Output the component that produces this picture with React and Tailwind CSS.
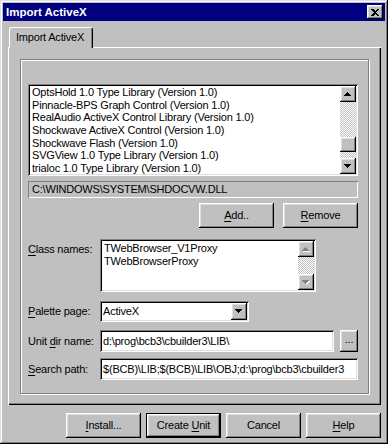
import React from 'react';

const raised =
  'bg-[#c0c0c0] shadow-[inset_-1px_-1px_#000,inset_1px_1px_#fff,inset_-2px_-2px_#808080,inset_2px_2px_#dfdfdf]';
const sunken =
  'bg-white shadow-[inset_1px_1px_#808080,inset_-1px_-1px_#fff,inset_2px_2px_#000,inset_-2px_-2px_#dfdfdf]';
const checker =
  'bg-[repeating-conic-gradient(#c0c0c0_0%_25%,#fff_0%_50%)] bg-[length:2px_2px]';

const Arrow = ({ dir = 'up', disabled }) => {
  const pts = dir === 'up' ? '3.5,0 7,4 0,4' : '0,0 7,0 3.5,4';
  return (
    <svg width="8" height="5" viewBox="0 0 8 5" shapeRendering="crispEdges">
      {disabled && <polygon points={pts} fill="#fff" transform="translate(1,1)" />}
      <polygon points={pts} fill={disabled ? '#808080' : '#000'} />
    </svg>
  );
};

const ArrowButton = ({ dir, disabled, h = 'h-[16px]' }) => (
  <div className={`w-[16px] ${h} shrink-0 flex items-center justify-center ${raised}`}>
    <Arrow dir={dir} disabled={disabled} />
  </div>
);

const Button = ({ children, className = '' }) => (
  <div className={`h-[25px] flex items-center justify-center ${raised} ${className}`}>
    <span>{children}</span>
  </div>
);

const U = ({ children }) => <span className="underline underline-offset-[2px]">{children}</span>;

const libraries = [
  'OptsHold 1.0 Type Library (Version 1.0)',
  'Pinnacle-BPS Graph Control (Version 1.0)',
  'RealAudio ActiveX Control Library (Version 1.0)',
  'Shockwave ActiveX Control (Version 1.0)',
  'Shockwave Flash (Version 1.0)',
  'SVGView 1.0 Type Library (Version 1.0)',
  'trialoc 1.0 Type Library (Version 1.0)',
];

export default function App() {
  return (
    <div className="w-[388px] h-[444px] bg-[#c0c0c0] p-[3px] flex flex-col text-black text-[11px] tracking-[-0.2px] leading-[13px] font-['Liberation_Sans',Arial,sans-serif] shadow-[inset_-1px_-1px_#000,inset_1px_1px_#dfdfdf,inset_-2px_-2px_#808080,inset_2px_2px_#fff] overflow-hidden">
      {/* Title bar */}
      <div className="h-[18px] bg-[#000080] flex items-center justify-between pl-[3px] pr-[2px]">
        <span className="text-white font-bold text-[11.5px] tracking-normal">Import ActiveX</span>
        <div className={`w-[16px] h-[14px] flex items-center justify-center ${raised}`}>
          <svg width="8" height="7" viewBox="0 0 8 7" shapeRendering="crispEdges">
            <path d="M0 0h2l2 2 2-2h2L5 3.5 8 7H6L4 5 2 7H0l3-3.5z" fill="#000" />
          </svg>
        </div>
      </div>

      {/* Tab control */}
      <div className="mt-[6px] pl-[5px] flex flex-col">
        <div className="ml-[1px] w-[84px] h-[21px] -mb-[1px] relative z-10 bg-[#c0c0c0] border-l border-t border-r border-l-white border-t-white border-r-black rounded-t-[3px] shadow-[inset_-1px_0_#808080] pl-[6px] pt-[3px]">
          Import ActiveX
        </div>

        <div className="w-[373px] h-[358px] bg-[#c0c0c0] shadow-[inset_1px_1px_#fff,inset_-1px_-1px_#000,inset_-2px_-2px_#808080] pt-[12px] px-[12px]">
          {/* Group box */}
          <div className="h-[335px] border border-[#808080] shadow-[inset_1px_1px_#fff,1px_1px_#fff] pt-[24px] pl-[7px] pr-[10px] flex flex-col">
            {/* Library list */}
            <div className={`w-[330px] h-[92px] p-[2px] flex ${sunken}`}>
              <div className="flex-1 pl-[2px] overflow-hidden whitespace-nowrap">
                {libraries.map((lib) => (
                  <div key={lib} className="h-[12.7px] leading-[12.7px]">
                    {lib}
                  </div>
                ))}
              </div>
              <div className="w-[16px] flex flex-col">
                <ArrowButton dir="up" />
                <div className={`flex-1 ${checker}`}>
                  <div className={`mt-[35px] w-[16px] h-[15px] ${raised}`} />
                </div>
                <ArrowButton dir="down" />
              </div>
            </div>

            {/* Path */}
            <div className="mt-[5px] w-[330px] h-[17px] shadow-[inset_1px_1px_#808080,inset_-1px_-1px_#fff] pl-[4px] flex items-center">
              {'C:\\WINDOWS\\SYSTEM\\SHDOCVW.DLL'}
            </div>

            {/* Add / Remove */}
            <div className="mt-[5px] w-[330px] flex justify-end gap-[9px]">
              <Button className="w-[75px]">
                <U>A</U>dd..
              </Button>
              <Button className="w-[75px]">
                <U>R</U>emove
              </Button>
            </div>

            {/* Class names */}
            <div className="mt-[11px] flex">
              <div className="w-[72px] pt-[4px]">
                <U>C</U>lass names:
              </div>
              <div className={`w-[216px] h-[53px] p-[2px] flex ${sunken}`}>
                <div className="flex-1 pl-[2px] pt-[1px] overflow-hidden whitespace-nowrap">
                  <div>TWebBrowser_V1Proxy</div>
                  <div>TWebBrowserProxy</div>
                </div>
                <div className="w-[16px] flex flex-col">
                  <ArrowButton dir="up" disabled />
                  <div className={`flex-1 ${checker}`} />
                  <ArrowButton dir="down" disabled />
                </div>
              </div>
            </div>

            {/* Palette page */}
            <div className="mt-[9px] flex items-center">
              <div className="w-[72px]">
                <U>P</U>alette page:
              </div>
              <div className={`w-[149px] h-[21px] p-[2px] flex ${sunken}`}>
                <div className="flex-1 pl-[1px] flex items-center">ActiveX</div>
                <ArrowButton dir="down" h="h-[17px]" />
              </div>
            </div>

            {/* Unit dir name */}
            <div className="mt-[8px] flex items-center">
              <div className="w-[72px]">
                Unit <U>d</U>ir name:
              </div>
              <div className={`w-[234px] h-[22px] pl-[3px] flex items-center ${sunken}`}>
                {'d:\\prog\\bcb3\\cbuilder3\\LIB\\'}
              </div>
              <Button className="ml-[6px] w-[18px] !h-[22px]">
                <span className="relative -top-[2px]">...</span>
              </Button>
            </div>

            {/* Search path */}
            <div className="mt-[6px] flex items-center">
              <div className="w-[72px]">
                <U>S</U>earch path:
              </div>
              <div className={`w-[258px] h-[22px] px-[3px] flex items-center overflow-hidden whitespace-nowrap ${sunken}`}>
                {'$(BCB)\\LIB;$(BCB)\\LIB\\OBJ;d:\\prog\\bcb3\\cbuilder3'}
              </div>
            </div>
          </div>
        </div>
      </div>

      {/* Dialog buttons */}
      <div className="mt-[8px] pr-[4px] flex justify-end gap-[5px]">
        <Button className="w-[75px]">
          <U>I</U>nstall...
        </Button>
        <div className="w-[75px] h-[25px] border border-black">
          <Button className="w-full !h-[23px]">
            Create <U>U</U>nit
          </Button>
        </div>
        <Button className="w-[75px]">Cancel</Button>
        <Button className="w-[75px]">
          <U>H</U>elp
        </Button>
      </div>
    </div>
  );
}
